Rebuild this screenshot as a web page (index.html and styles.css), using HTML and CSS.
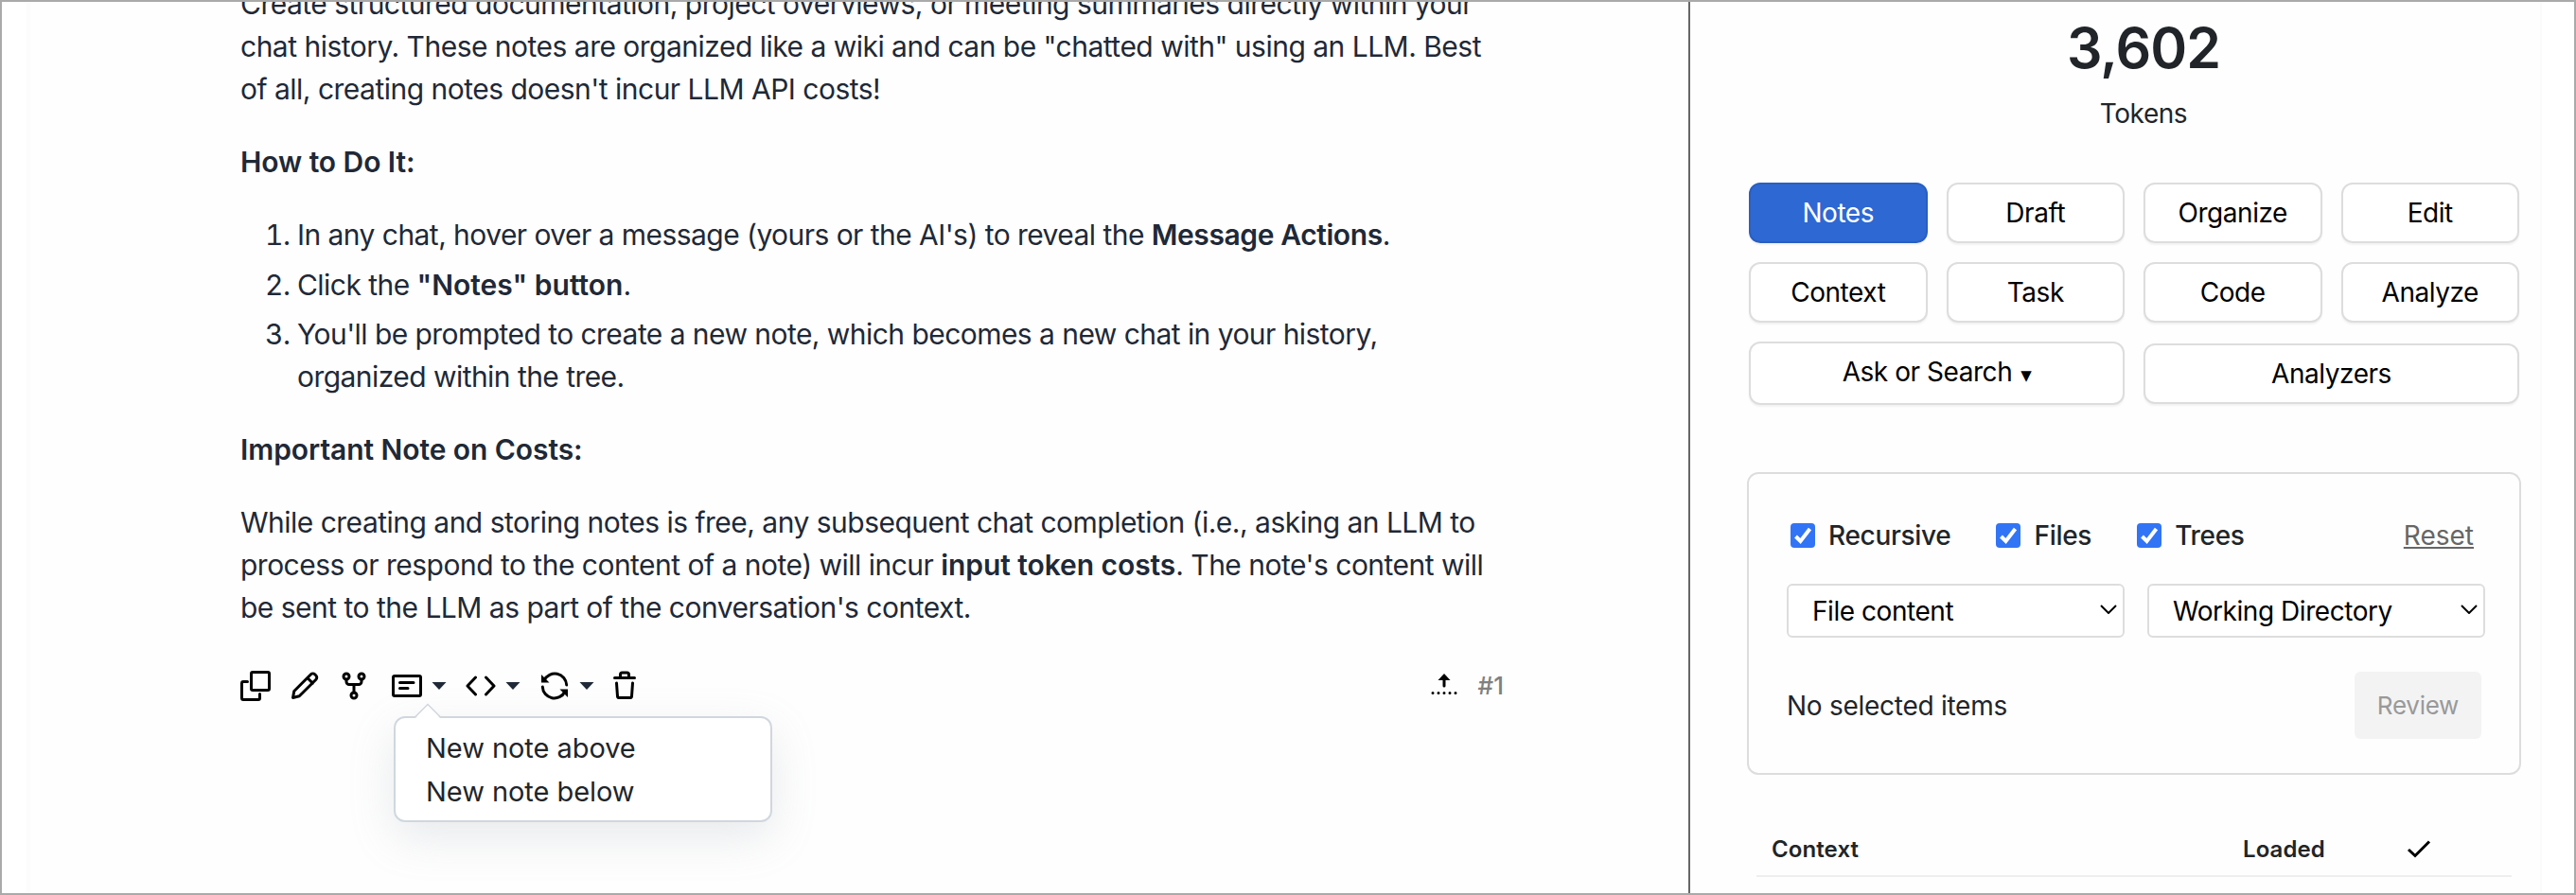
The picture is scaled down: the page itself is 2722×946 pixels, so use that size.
FILE: index.html
```html
<!DOCTYPE html>
<html lang="en">
<head>
<meta charset="utf-8">
<title>Notes</title>
<link rel="stylesheet" href="styles.css">
</head>
<body>
<div class="frame">
  <main class="chat">
    <article class="message">
      <p>Create structured documentation, project overviews, or meeting summaries directly within your<br>chat history. These notes are organized like a wiki and can be "chatted with" using an LLM. Best<br>of all, creating notes doesn't incur LLM API costs!</p>
      <p><strong>How to Do It:</strong></p>
      <ol>
        <li>In any chat, hover over a message (yours or the AI's) to reveal the <strong>Message Actions</strong>.</li>
        <li>Click the <strong class="loose">"Notes" button</strong>.</li>
        <li>You'll be prompted to create a new note, which becomes a new chat in your history,<br>organized within the tree.</li>
      </ol>
      <p><strong>Important Note on Costs:</strong></p>
      <p>While creating and storing notes is free, any subsequent chat completion (i.e., asking an LLM to<br>process or respond to the content of a note) will incur <strong>input token costs</strong>. The note's content will<br>be sent to the LLM as part of the conversation's context.</p>
    </article>

    <div class="toolbar">
      <svg class="icon" viewBox="0 0 32 32"><rect x="11.5" y="1.5" width="19" height="19" rx="1.5"/><path d="M7.5 11.5H3a1.5 1.5 0 0 0-1.500 1.500V29A1.500 1.500 0 0 0 3 30.500H19A1.500 1.500 0 0 0 20.500 29V24.500"/></svg>
      <svg class="icon" viewBox="0 0 32 32"><path d="M3.500 28.500L4.800 21.500L22.500 3.800a3 3 0 0 1 4.200 0l1.200 1.200a3 3 0 0 1 0 4.200L10.300 26.800ZM18.800 7.500l5.600 5.600"/></svg>
      <svg class="icon" viewBox="0 0 32 32"><circle cx="8" cy="6" r="3"/><circle cx="24" cy="6" r="3"/><circle cx="16" cy="26" r="3"/><path d="M8 9v2.500a3 3 0 0 0 3 3H21a3 3 0 0 0 3-3V9M16 14.500V23"/></svg>
      <div class="group group-notes">
        <svg class="icon" viewBox="0 0 32 32"><rect x="1.500" y="5.500" width="29" height="21" rx="1.500"/><path d="M8.500 12.500H23M8.500 18.500H17"/></svg>
        <svg class="caret" viewBox="0 0 16 8"><path d="M.5 0H15.500L8 8Z"/></svg>
        <div class="menu">
          <svg class="menu-tip" viewBox="0 0 30 17"><path class="tip-fill" d="M1 17L15 2L29 17Z"/><path class="tip-line" d="M1 15.500L15 1.500L29 15.500"/></svg>
          <div class="menu-item">New note above</div>
          <div class="menu-item">New note below</div>
        </div>
      </div>
      <div class="group">
        <svg class="icon" viewBox="0 0 32 32"><path d="M10.500 7L2 16l8.500 9M21.500 7l8.500 9l-8.500 9"/></svg>
        <svg class="caret" viewBox="0 0 16 8"><path d="M.5 0H15.500L8 8Z"/></svg>
      </div>
      <div class="group">
        <svg class="icon" viewBox="0 0 32 32"><path d="M5 10A12.500 12.500 0 0 1 28.700 15M27 22A12.500 12.500 0 0 1 3.300 17"/><path class="solid" d="M2 4V12.500H10.500ZM30 28V19.500H21.500Z"/></svg>
        <svg class="caret" viewBox="0 0 16 8"><path d="M.5 0H15.500L8 8Z"/></svg>
      </div>
      <svg class="icon icon-trash" viewBox="0 0 32 32"><path d="M5.500 7.500H26.500M11.500 7V4a2 2 0 0 1 2-2h5a2 2 0 0 1 2 2V7M7.500 13l1 14a1.700 1.700 0 0 0 1.700 1.500H21.800a1.700 1.700 0 0 0 1.700-1.500l1-14"/></svg>
      <div class="toolbar-end">
        <svg class="icon" viewBox="0 0 32 32"><path d="M16 8V16"/><path class="solid" d="M16 3L22.500 10H9.500Z"/><path d="M4 23.500H28.100" stroke-dasharray="0 6"/></svg>
        <span class="number">#1</span>
      </div>
    </div>
  </main>

  <aside class="panel">
    <div class="tokens">
      <div class="count">3,602</div>
      <div class="unit">Tokens</div>
    </div>
    <div class="modes">
      <div class="btn active">Notes</div><div class="btn">Draft</div><div class="btn">Organize</div><div class="btn">Edit</div>
      <div class="btn">Context</div><div class="btn">Task</div><div class="btn">Code</div><div class="btn">Analyze</div>
      <div class="btn wide ask">Ask or Search<span class="arrow">▼</span></div><div class="btn wide">Analyzers</div>
    </div>
    <section class="card">
      <div class="checks">
        <label class="check"><svg class="box" viewBox="0 0 26 26"><path d="M5.500 14L10.500 19L20.500 6"/></svg>Recursive</label>
        <label class="check"><svg class="box" viewBox="0 0 26 26"><path d="M5.500 14L10.500 19L20.500 6"/></svg>Files</label>
        <label class="check"><svg class="box" viewBox="0 0 26 26"><path d="M5.500 14L10.500 19L20.500 6"/></svg>Trees</label>
        <a class="reset">Reset</a>
      </div>
      <div class="selects">
        <div class="select">File content<svg class="chev" viewBox="0 0 18 10"><path d="M1 1L9 9L17 1"/></svg></div>
        <div class="select">Working Directory<svg class="chev" viewBox="0 0 18 10"><path d="M1 1L9 9L17 1"/></svg></div>
      </div>
      <div class="selection">
        <span>No selected items</span>
        <div class="review">Review</div>
      </div>
    </section>
    <div class="table-head">
      <span class="col-context">Context</span>
      <span class="col-loaded">Loaded</span>
      <svg class="tick" viewBox="0 0 26 20"><path d="M2 11L9 17.500L24 2.500"/></svg>
    </div>
  </aside>
  <div class="gutter"></div>
</div>
</body>
</html>
```
FILE: styles.css
```css
* { box-sizing: border-box; }

body {
  margin: 0;
  font-family: Inter, "Noto Sans", sans-serif;
  color: #212529;
}

.frame {
  display: flex;
  width: 2722px;
  height: 946px;
  border: 2px solid #aaa;
  background: #fefefe;
  overflow: hidden;
}

.chat {
  flex: none;
  width: 1784px;
  padding: 0 0 0 252px;
  border-right: 2px solid #666;
  background: linear-gradient(to right, #fff 26px, #fcfcfc 26px, #fcfcfc 30px, #fefefe 30px);
}

.message {
  margin-top: -20px;
  font-size: 30px;
  line-height: 45px;
  letter-spacing: -0.51px;
  color: #1f2937;
  white-space: nowrap;
}

.message p { margin: 0 0 32px; }
.message p:last-child { margin: 0; }
.message ol { margin: 0 0 32px; padding-left: 60px; letter-spacing: -0.55px; }
.message li + li { margin-top: 7.5px; }
.message strong { font-weight: 600; letter-spacing: -0.07px; }
.message li strong { letter-spacing: -0.4px; }
.message li strong.loose { letter-spacing: 0; }

.toolbar {
  display: flex;
  align-items: center;
  gap: 20px;
  width: 1335px;
  height: 32px;
  margin-top: 44px;
}

.icon {
  flex: none;
  width: 32px;
  height: 32px;
  fill: none;
  stroke: #000;
  stroke-width: 3;
  stroke-linecap: round;
  stroke-linejoin: round;
}
.icon .solid { fill: #000; stroke: none; }
.icon-trash { margin-left: -4px; }

.group { position: relative; display: flex; align-items: center; gap: 10px; }
.group-notes { margin-left: 4px; }
.caret { width: 16px; height: 8px; fill: #1f2937; }

.menu {
  position: absolute;
  top: 48px;
  left: 2px;
  width: 400px;
  height: 112px;
  padding: 9px 32px 7px;
  border: 2px solid #d0d7de;
  border-radius: 12px;
  background: #fff;
  box-shadow: 0 16px 48px rgba(140, 149, 159, 0.2);
}
.menu-tip { position: absolute; top: -16px; left: 19px; width: 30px; height: 17px; }
.tip-fill { fill: #fff; }
.tip-line { fill: none; stroke: #d0d7de; stroke-width: 1.5; }
.menu-item { font-size: 29px; line-height: 46px; letter-spacing: -0.05px; }

.toolbar-end { display: flex; align-items: center; gap: 20px; margin-left: auto; }
.number { font-size: 26px; line-height: 32px; font-weight: 500; color: #808080; }

.panel {
  flex: none;
  width: 898px;
  padding: 0 20px 0 60px;
  font-size: 28px;
  letter-spacing: -0.45px;
}

.tokens { padding: 13px 0 0 20px; text-align: center; }
.count { font-size: 59px; line-height: 72px; font-weight: 600; letter-spacing: -1px; }
.unit { margin-top: 13px; line-height: 40px; }

.modes {
  display: grid;
  grid-template-columns: repeat(4, 1fr);
  gap: 20px;
  align-items: center;
  width: 818px;
  margin-top: 53px;
  padding: 0 2px;
}

.btn {
  height: 64px;
  border: 2px solid #ddd;
  border-radius: 12px;
  background: #fff;
  box-shadow: 0 2px 2px rgba(0, 0, 0, 0.05);
  color: #000;
  line-height: 60px;
  text-align: center;
}
.btn.wide { grid-column: span 2; }
.btn.active { border-color: #2a5fc0; background: #2d68d3; color: #fff; }
.btn.ask { height: 67px; }
.arrow { margin-left: 9px; font-family: "DejaVu Sans", sans-serif; font-size: 15px; line-height: 1; vertical-align: 1px; }

.card {
  width: 818px;
  height: 320px;
  margin-top: 71px;
  padding: 46px 36px 36px 40px;
  border: 2px solid #ddd;
  border-radius: 12px;
}

.checks { display: flex; align-items: center; height: 38px; padding-left: 4px; }
.check { display: flex; align-items: center; gap: 14px; margin-right: 48px; font-weight: 500; letter-spacing: -0.3px; }
.box { width: 26px; height: 26px; border-radius: 4px; background: #3274f6; fill: none; stroke: #fff; stroke-width: 4; }
.reset { margin: 0 12px 0 auto; color: #666; letter-spacing: 0; text-decoration: underline; text-decoration-thickness: 2px; text-underline-offset: 2px; }

.selects { display: flex; gap: 24px; margin-top: 32px; }
.select {
  display: flex;
  flex: 1;
  align-items: center;
  justify-content: space-between;
  height: 57px;
  padding: 0 6px 0 25px;
  border: 2px solid #ddd;
  border-radius: 6px;
  background: #fff;
  color: #000;
}
.chev { width: 18px; height: 10px; margin-top: -3px; fill: none; stroke: #000; stroke-width: 2; }

.selection { display: flex; align-items: center; justify-content: space-between; margin-top: 36px; padding-right: 4px; letter-spacing: -0.27px; }
.review { width: 134px; height: 71px; border-radius: 6px; background: #f3f3f3; color: #999; font-size: 26px; line-height: 71px; text-align: center; }

.table-head {
  display: flex;
  align-items: center;
  width: 798px;
  height: 59px;
  margin: 49px 0 0 10px;
  padding: 1px 0 0 16px;
  border-bottom: 2px solid #eee;
  font-size: 24px;
  font-weight: 600;
  letter-spacing: 0.1px;
}
.col-context { width: 498px; }
.col-loaded { width: 173px; }
.tick { width: 26px; height: 20px; fill: none; stroke: #000; stroke-width: 3; }

.gutter { flex: 1; border-left: 2px solid #fbfbfb; background: #fff; }
```
